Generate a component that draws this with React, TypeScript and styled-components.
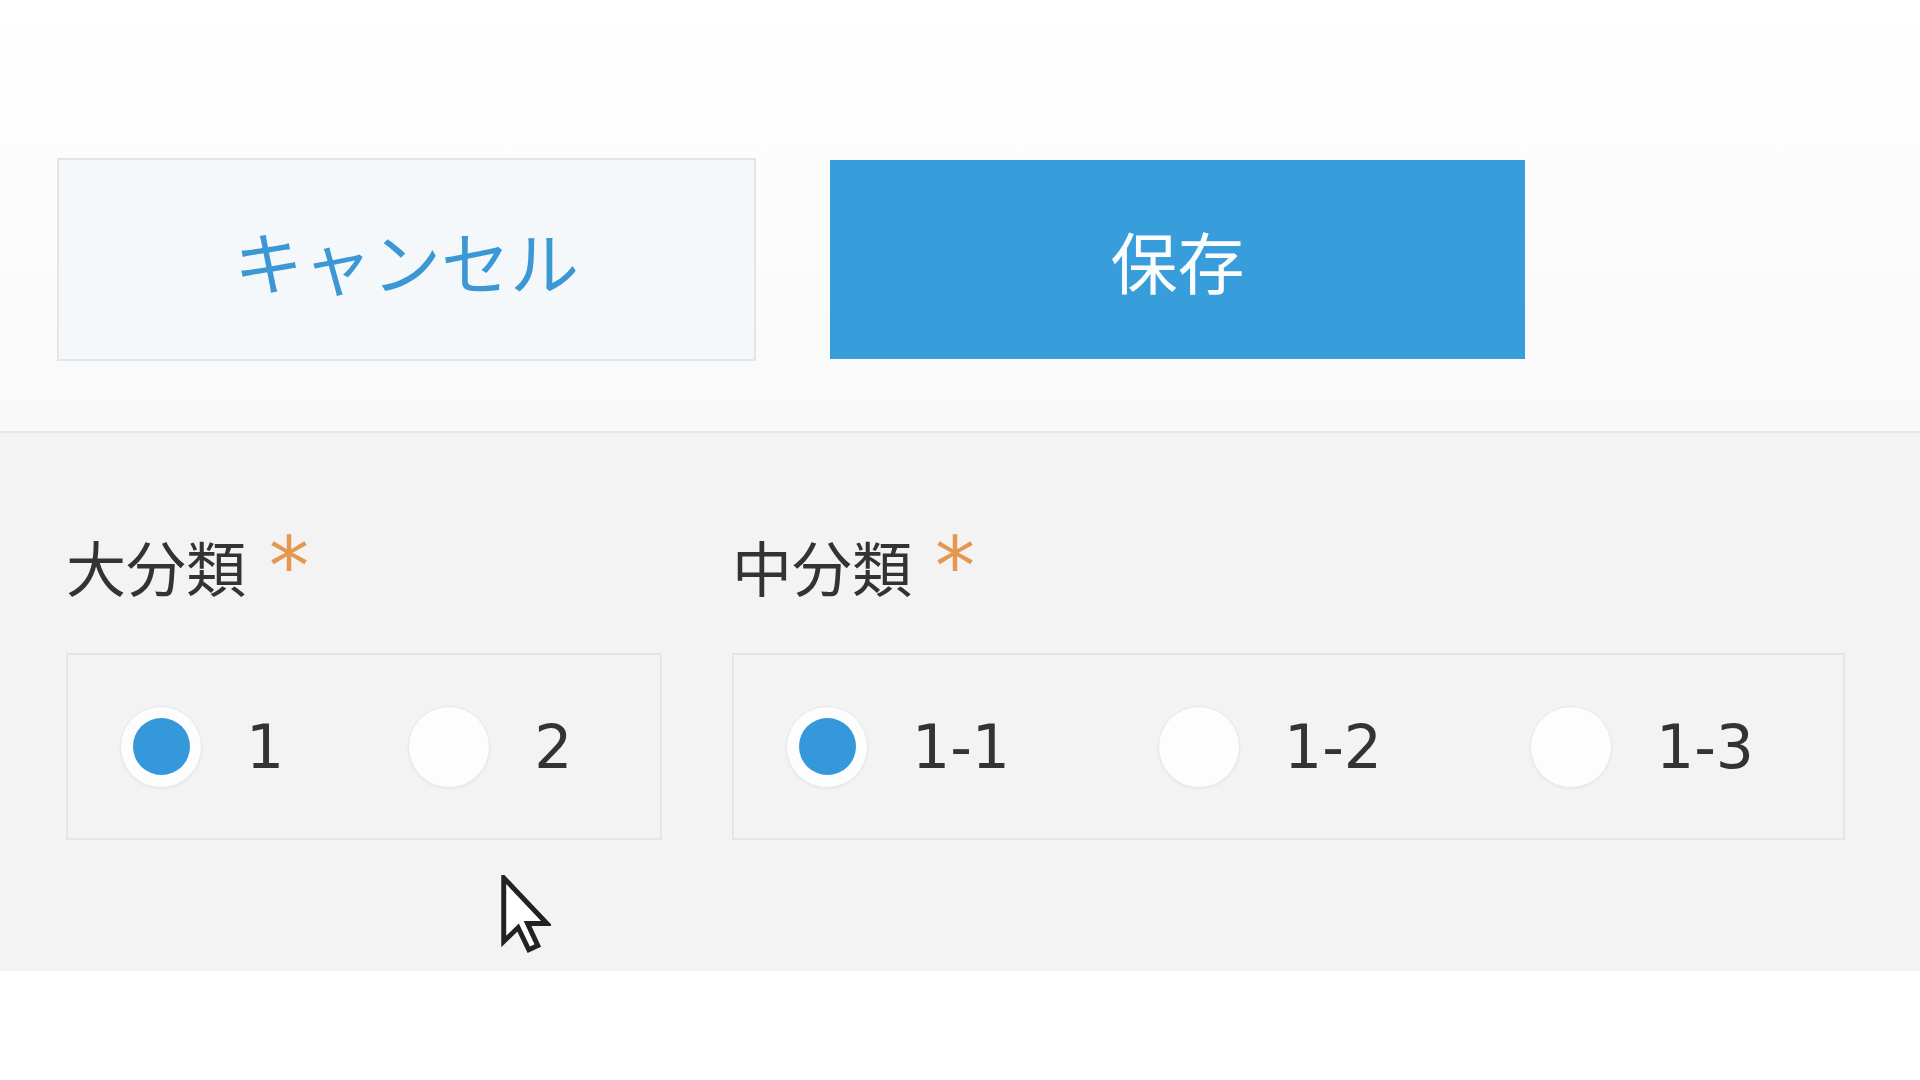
import React from 'react';
import styled, { createGlobalStyle } from 'styled-components';

const GlobalStyle = createGlobalStyle`
  html, body {
    margin: 0;
    padding: 0;
    background: #ffffff;
    font-family: "Noto Sans CJK JP", "Noto Sans", sans-serif;
  }
`;

type Option = { label: string; checked?: boolean };
type Group = { title: string; width: number; gap: number; options: Option[] };

const groups: Group[] = [
  { title: '大分類', width: 596, gap: 124, options: [{ label: '1', checked: true }, { label: '2' }] },
  {
    title: '中分類',
    width: 1113,
    gap: 148,
    options: [{ label: '1-1', checked: true }, { label: '1-2' }, { label: '1-3' }],
  },
];

const App = () => {
  return (
    <Page>
      <GlobalStyle />
      <ActionBar>
        <CancelButton>キャンセル</CancelButton>
        <SaveButton>保存</SaveButton>
      </ActionBar>
      <FormArea>
        {groups.map((g) => (
          <Field key={g.title}>
            <FieldLabel>
              {g.title}
              <Required>*</Required>
            </FieldLabel>
            <RadioBox $width={g.width} $gap={g.gap}>
              {g.options.map((o) => (
                <RadioItem key={o.label}>
                  <RadioCircle $checked={!!o.checked} />
                  <RadioText>{o.label}</RadioText>
                </RadioItem>
              ))}
            </RadioBox>
          </Field>
        ))}
        <Pointer width="51" height="78" viewBox="0 0 12 19">
          <path
            d="M0.7 0.7 L0.7 16.2 L4.2 12.8 L6.8 18.2 L9 17.2 L6.5 11.8 L11.2 11.8 Z"
            fill="#ffffff"
            stroke="#222222"
            strokeWidth="1.2"
            strokeLinejoin="miter"
          />
        </Pointer>
      </FormArea>
    </Page>
  );
};

const Page = styled.div`
  width: 1920px;
  min-height: 1080px;
  background: #ffffff;
`;

const ActionBar = styled.div`
  box-sizing: border-box;
  height: 433px;
  padding: 158px 0 0 57px;
  display: flex;
  align-items: flex-start;
  gap: 74px;
  background: linear-gradient(#ffffff, #f9f9f9);
  border-bottom: 2px solid #e7e7e7;
`;

const BaseButton = styled.button`
  box-sizing: border-box;
  display: flex;
  align-items: center;
  justify-content: center;
  font-family: "Noto Sans CJK JP", sans-serif;
  font-weight: 400;
  padding: 0;
  cursor: pointer;
`;

const CancelButton = styled(BaseButton)`
  width: 699px;
  height: 203px;
  font-size: 69px;
  background: #f5f8fa;
  border: 2px solid #e3e5e7;
  color: #3b98d4;
`;

const SaveButton = styled(BaseButton)`
  margin-top: 2px;
  width: 695px;
  height: 199px;
  font-size: 67px;
  background: #379edb;
  border: none;
  color: #fafcfd;
`;

const FormArea = styled.div`
  position: relative;
  box-sizing: border-box;
  height: 538px;
  padding: 97px 0 0 66px;
  display: flex;
  gap: 70px;
  background: #f3f3f3;
`;

const Field = styled.div`
  display: flex;
  flex-direction: column;
`;

const FieldLabel = styled.div`
  font-size: 60px;
  line-height: 72px;
  color: #333333;
  margin: 0 0 51px 0;
  white-space: nowrap;
`;

const Required = styled.span`
  display: inline-block;
  margin-left: 23px;
  color: #e5964f;
  font-family: "DejaVu Sans", sans-serif;
  font-size: 80px;
  line-height: 72px;
  vertical-align: top;
  transform: translateY(1px);
`;

const RadioBox = styled.div<{ $width: number; $gap: number }>`
  box-sizing: border-box;
  width: ${(p) => p.$width}px;
  height: 187px;
  border: 2px solid #e5e5e5;
  padding-left: 52px;
  display: flex;
  align-items: center;
  gap: ${(p) => p.$gap}px;
`;

const RadioItem = styled.label`
  display: flex;
  align-items: center;
`;

const RadioCircle = styled.span<{ $checked: boolean }>`
  box-sizing: border-box;
  width: 82px;
  height: 82px;
  border-radius: 50%;
  background: #fdfdfd;
  border: 1px solid #e9e9e9;
  box-shadow: 0 1px 3px rgba(0, 0, 0, 0.05);
  display: flex;
  align-items: center;
  justify-content: center;

  &::after {
    content: '';
    width: 57px;
    height: 57px;
    border-radius: 50%;
    background: ${(p) => (p.$checked ? '#3498db' : 'transparent')};
  }
`;

const RadioText = styled.span`
  margin-left: 44px;
  font-family: "DejaVu Sans", "Liberation Sans", sans-serif;
  font-size: 60px;
  color: #333333;
`;

const Pointer = styled.svg`
  position: absolute;
  left: 500px;
  top: 442px;
`;

export default App;
